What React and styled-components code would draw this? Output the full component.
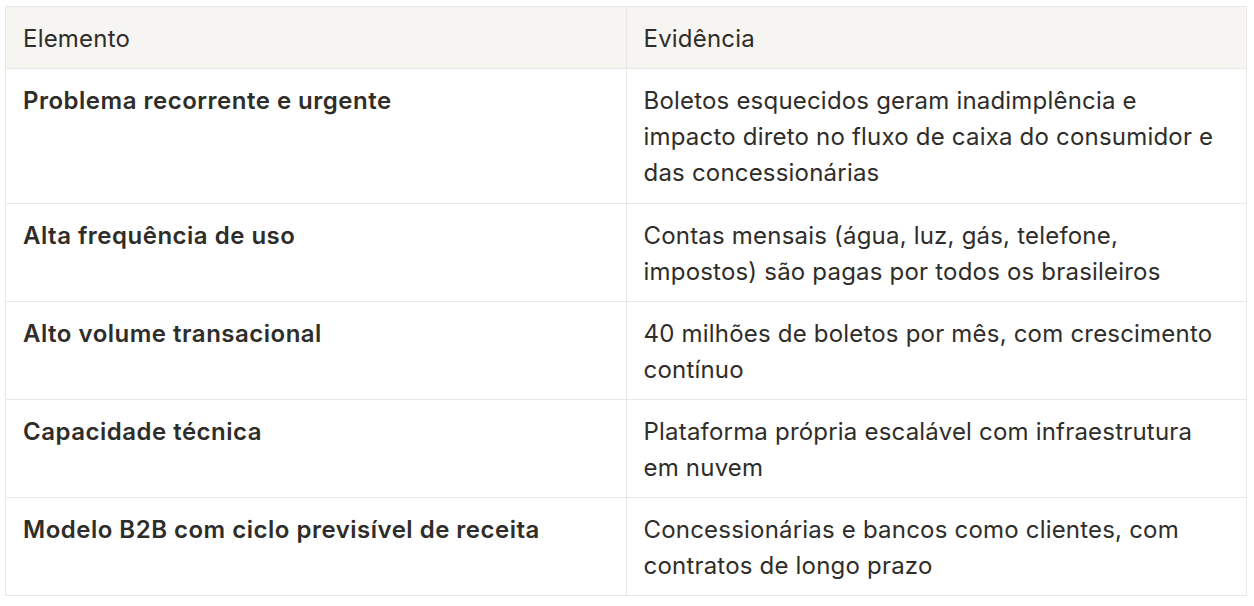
import React from "react";
import styled, { createGlobalStyle } from "styled-components";

const GlobalStyle = createGlobalStyle`
  html, body {
    margin: 0;
    padding: 0;
    background: #ffffff;
  }
  body {
    font-family: Inter, "Noto Sans", "Liberation Sans", sans-serif;
    -webkit-font-smoothing: antialiased;
  }
`;

const Page = styled.div`
  padding: 6px 7px 0 5px;
`;

const Table = styled.table`
  width: 1242px;
  border-collapse: collapse;
  table-layout: fixed;
  color: #2f2d2a;
  font-size: 24px;
  line-height: 36px;
  letter-spacing: 0.2px;
`;

const HeadCell = styled.th`
  background: #f6f5f2;
  border: 1px solid #e9e8e5;
  padding: 14px 17px 11px;
  text-align: left;
  font-weight: 400;
  vertical-align: top;
`;

const Cell = styled.td`
  border: 1px solid #e9e8e5;
  padding: 14px 17px ${(p) => (p.$tall ? "12px" : "11px")};
  vertical-align: top;
  font-weight: ${(p) => (p.$strong ? 600 : 400)};
  letter-spacing: ${(p) => (p.$strong ? "0.5px" : "0.2px")};
  white-space: nowrap;
`;

const rows = [
  {
    item: "Problema recorrente e urgente",
    proof: [
      "Boletos esquecidos geram inadimplência e",
      "impacto direto no fluxo de caixa do consumidor e",
      "das concessionárias",
    ],
  },
  {
    item: "Alta frequência de uso",
    proof: [
      "Contas mensais (água, luz, gás, telefone,",
      "impostos) são pagas por todos os brasileiros",
    ],
  },
  {
    item: "Alto volume transacional",
    proof: [
      "40 milhões de boletos por mês, com crescimento",
      "contínuo",
    ],
  },
  {
    item: "Capacidade técnica",
    proof: [
      "Plataforma própria escalável com infraestrutura",
      "em nuvem",
    ],
  },
  {
    item: "Modelo B2B com ciclo previsível de receita",
    proof: [
      "Concessionárias e bancos como clientes, com",
      "contratos de longo prazo",
    ],
  },
];

const App = () => {
  return (
    <Page>
      <GlobalStyle />
      <Table>
        <colgroup>
          <col style={{ width: "50%" }} />
          <col style={{ width: "50%" }} />
        </colgroup>
        <thead>
          <tr>
            <HeadCell>Elemento</HeadCell>
            <HeadCell>Evidência</HeadCell>
          </tr>
        </thead>
        <tbody>
          {rows.map((row) => (
            <tr key={row.item}>
              <Cell $strong>{row.item}</Cell>
              <Cell $tall={row.proof.length > 2}>
                {row.proof.map((line, i) => (
                  <React.Fragment key={i}>
                    {i > 0 && <br />}
                    {line}
                  </React.Fragment>
                ))}
              </Cell>
            </tr>
          ))}
        </tbody>
      </Table>
    </Page>
  );
};

export default App;
